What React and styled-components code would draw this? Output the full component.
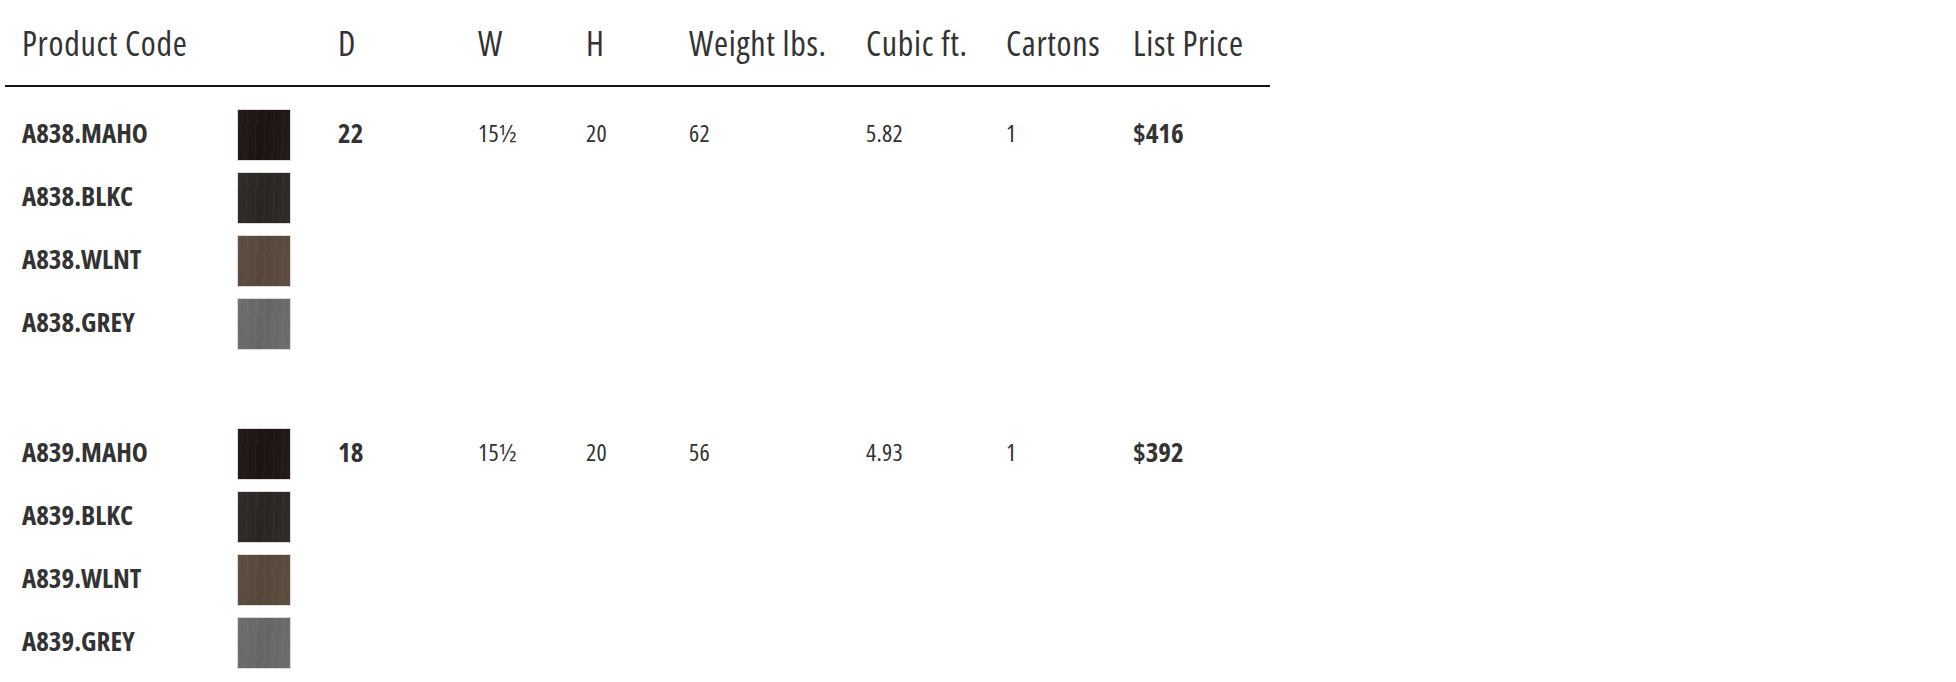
import React from "react";
import styled, { createGlobalStyle } from "styled-components";

const GlobalStyle = createGlobalStyle`
  body {
    margin: 0;
    background: #fff;
    font-family: "Open Sans", "DejaVu Sans Condensed", sans-serif;
    font-stretch: 75%;
    color: #333;
  }
`;

const finishes = {
  MAHO: "#1f1314",
  BLKC: "#2a2724",
  WLNT: "#594a3c",
  GREY: "#6b6a6a"
};

const products = [
  { model: "A838", d: "22", w: "15½", h: "20", weight: "62", cubic: "5.82", cartons: "1", price: "$416" },
  { model: "A839", d: "18", w: "15½", h: "20", weight: "56", cubic: "4.93", cartons: "1", price: "$392" }
];

const headers = ["Product Code", "", "D", "W", "H", "Weight lbs.", "Cubic ft.", "Cartons", "List Price"];

const App = () => {
  return (
    <>
      <GlobalStyle />
      <Table>
        <HeaderRow>
          {headers.map((label, i) => (
            <HeaderCell key={i}>{label}</HeaderCell>
          ))}
        </HeaderRow>
        {products.map(product => (
          <Group key={product.model}>
            {Object.keys(finishes).map((finish, i) => (
              <Row key={finish}>
                <Code>
                  {product.model}.{finish}
                </Code>
                <Swatch $color={finishes[finish]} />
                {i === 0 ? (
                  <>
                    <Bold>{product.d}</Bold>
                    <Cell>{product.w}</Cell>
                    <Cell>{product.h}</Cell>
                    <Cell>{product.weight}</Cell>
                    <Cell>{product.cubic}</Cell>
                    <Cell>{product.cartons}</Cell>
                    <Bold>{product.price}</Bold>
                  </>
                ) : null}
              </Row>
            ))}
          </Group>
        ))}
      </Table>
    </>
  );
};

const columns = "215px 101px 140px 108px 103px 177px 140px 127px 1fr";

const Table = styled.div`
  width: 1265px;
  margin-left: 5px;
`;

const HeaderRow = styled.div`
  display: grid;
  grid-template-columns: ${columns};
  padding: 26px 0 0 17px;
  height: 87px;
  box-sizing: border-box;
  border-bottom: 2px solid #151515;
`;

const HeaderCell = styled.div`
  font-size: 34px;
  letter-spacing: 0.7px;
  line-height: 34px;
  color: #333;
  white-space: nowrap;
`;

const Group = styled.div`
  display: flex;
  flex-direction: column;
  gap: 11px;
  padding-top: 22px;
  & + & {
    padding-top: 78px;
  }
`;

const Row = styled.div`
  display: grid;
  grid-template-columns: ${columns};
  align-items: center;
  height: 52px;
  padding-left: 17px;
`;

const Code = styled.div`
  font-size: 27px;
  font-weight: bold;
  line-height: 27px;
  margin-top: -6px;
  color: #333;
`;

// wood grain: fine vertical streaks over a soft diagonal sheen
const Swatch = styled.div`
  width: 52px;
  height: 50px;
  border: 1px solid #dcdad8;
  background-color: ${p => p.$color};
  background-image:
    repeating-linear-gradient(
      92deg,
      rgba(255, 255, 255, 0.035) 0 1px,
      rgba(0, 0, 0, 0) 1px 4px,
      rgba(0, 0, 0, 0.04) 4px 5px,
      rgba(0, 0, 0, 0) 5px 9px
    ),
    linear-gradient(
      100deg,
      rgba(255, 255, 255, 0.03),
      rgba(0, 0, 0, 0.04) 50%,
      rgba(255, 255, 255, 0.03)
    );
`;

const Cell = styled.div`
  font-size: 24px;
  letter-spacing: 0.3px;
  line-height: 24px;
  margin-top: -4px;
  color: #333;
`;

const Bold = styled(Cell)`
  font-size: 27px;
  letter-spacing: 0;
  line-height: 27px;
  font-weight: bold;
  margin-top: -6px;
`;

export default App;
